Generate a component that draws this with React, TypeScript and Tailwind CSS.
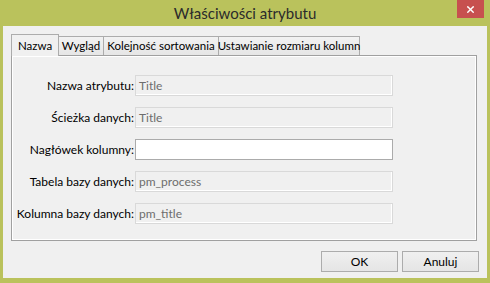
import { X } from "lucide-react";

const fields = [
  { label: "Nazwa atrybutu:", value: "Title", enabled: false },
  { label: "Ścieżka danych:", value: "Title", enabled: false },
  { label: "Nagłówek kolumny:", value: "", enabled: true },
  { label: "Tabela bazy danych:", value: "pm_process", enabled: false },
  { label: "Kolumna bazy danych:", value: "pm_title", enabled: false },
];

const App = () => {
  return (
    <div
      className="w-[490px] h-[283px] bg-[#bac25c] flex flex-col overflow-hidden"
      style={{ fontFamily: 'Lato, "Open Sans", sans-serif' }}
    >
      {/* Title bar */}
      <div className="h-[26px] grid grid-cols-[1fr_auto_1fr] items-start">
        <div />
        <div className="pt-[3px] text-[15px] leading-[20px] text-[#2b2b2b]">Właściwości atrybutu</div>
        <div className="flex justify-end pr-[6px]">
          <div className="w-[27px] h-[18px] bg-[#c7504f] flex items-center justify-center">
            <X className="w-[11px] h-[11px] text-white" strokeWidth={3} />
          </div>
        </div>
      </div>

      {/* Client area */}
      <div className="flex-1 mx-[3px] mb-[5px] bg-[#f0f0f0] flex flex-col pt-[8px] text-[12px] text-black whitespace-nowrap">
        {/* Tabs */}
        <div className="flex items-end pl-[8px] text-[11.5px]">
          <div className="relative z-10 w-[48px] h-[22px] -mb-px border border-b-0 border-[#acacac] bg-[#f0f0f0] flex items-center justify-center">
            Nazwa
          </div>
          <div className="w-[45px] h-[19px] border border-b-0 border-l-0 border-[#acacac] bg-gradient-to-b from-[#f2f2f2] to-[#e6e6e6] flex items-center justify-center">
            Wygląd
          </div>
          <div className="w-[116px] h-[19px] -ml-px border border-b-0 border-[#acacac] bg-gradient-to-b from-[#f2f2f2] to-[#e6e6e6] flex items-center justify-center">
            Kolejność sortowania
          </div>
          <div className="w-[142px] h-[19px] -ml-px border border-b-0 border-[#acacac] bg-gradient-to-b from-[#f2f2f2] to-[#e6e6e6] flex items-center justify-center">
            Ustawianie rozmiaru kolumn
          </div>
        </div>

        {/* Tab panel */}
        <div className="ml-[8px] mr-[10px] h-[186px] border border-[#a0a0a0] shadow-[inset_1px_1px_0_#ffffff,inset_-1px_-1px_0_#ffffff] bg-[#f0f0f0] pt-[19px]">
          <div className="grid grid-cols-[122px_258px] gap-x-[1px] gap-y-[11px] items-center">
            {fields.map((f, i) => (
              <div key={i} className="contents">
                <div className="text-right">{f.label}</div>
                <div
                  className={
                    f.enabled
                      ? "h-[21px] border border-[#ababab] bg-white"
                      : "h-[21px] border border-[#d9d9d9] bg-[#f0f0f0] shadow-[inset_-1px_-1px_0_#ffffff] text-[#6d6d6d] pl-[3px] flex items-center"
                  }
                >
                  {f.value}
                </div>
              </div>
            ))}
          </div>
        </div>

        {/* Buttons */}
        <div className="flex justify-end gap-[4px] pr-[8px] mt-[10px]">
          <button className="w-[77px] h-[21px] border border-[#acacac] bg-gradient-to-b from-[#f0f0f0] to-[#e5e5e5]">
            OK
          </button>
          <button className="w-[77px] h-[21px] border border-[#acacac] bg-gradient-to-b from-[#f0f0f0] to-[#e5e5e5]">
            Anuluj
          </button>
        </div>
      </div>
    </div>
  );
};

export default App;
